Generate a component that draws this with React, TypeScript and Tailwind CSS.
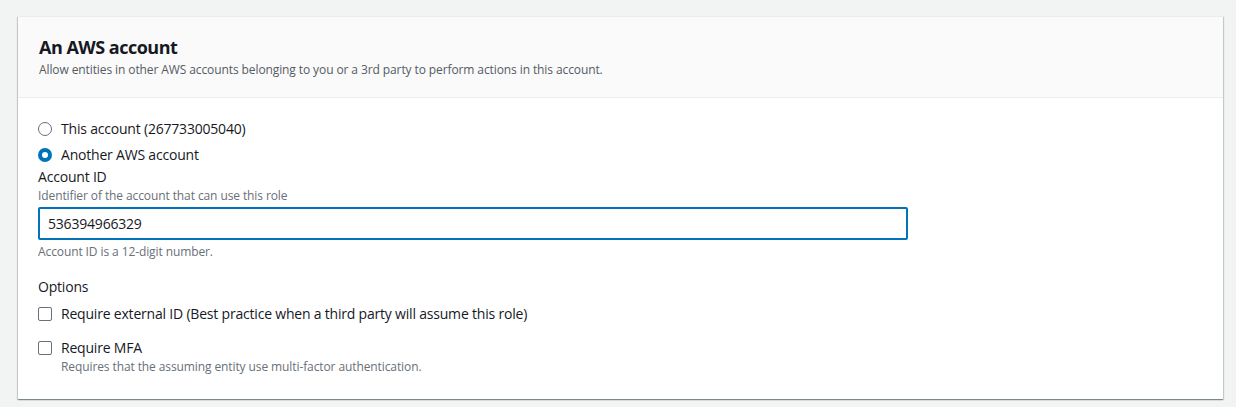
export default function App() {
  return (
    <main
      className="min-h-[407px] bg-[#f2f3f3] pl-[18px] pr-[13px] pt-[16px] pb-[9px] text-[#16191f]"
      style={{ fontFamily: '"Open Sans", "Noto Sans", Arial, sans-serif' }}
    >
      <section className="bg-white shadow-[0_1px_1px_0_rgba(0,28,36,0.3),1px_1px_1px_0_rgba(0,28,36,0.15),-1px_1px_1px_0_rgba(0,28,36,0.15)] border-t border-[#eaeded]">
        <Header />
        <div className="px-5 pt-[20px] pb-[24px]">
          <div className="flex flex-col gap-1">
            <Radio label="This account (267733005040)" />
            <Radio label="Another AWS account" checked />
          </div>

          <div>
            <div className="text-sm leading-[22px] tracking-[-0.2px]">Account ID</div>
            <div className="text-xs leading-4 tracking-[-0.1px] text-[#687078]">
              Identifier of the account that can use this role
            </div>
            <div className="mt-[3px] w-[870px] h-[33px] border-2 border-[#0073bb] rounded-[2px] flex items-center px-[8px] text-sm tracking-[-0.2px]">
              536394966329
            </div>
            <div className="mt-[4px] text-xs leading-4 tracking-[-0.1px] text-[#687078]">
              Account ID is a 12-digit number.
            </div>
          </div>

          <div className="mt-4">
            <div className="text-sm leading-[22px] tracking-[-0.2px]">Options</div>
            <div className="mt-[5px]">
              <Checkbox label="Require external ID (Best practice when a third party will assume this role)" />
            </div>
            <div className="mt-3">
              <Checkbox
                label="Require MFA"
                description="Requires that the assuming entity use multi-factor authentication."
              />
            </div>
          </div>
        </div>
      </section>
    </main>
  );
}

function Header() {
  return (
    <header className="bg-[#fafafa] border-b border-[#eaeded] pl-[21px] pr-5 pt-[19px] pb-[19px]">
      <h2 className="text-[18px] leading-[22px] font-bold tracking-[-0.5px]">An AWS account</h2>
      <p className="mt-[4px] text-xs leading-4 tracking-[-0.1px] text-[#545b64]">
        Allow entities in other AWS accounts belonging to you or a 3rd party to perform actions in this account.
      </p>
    </header>
  );
}

function Radio(props: { label: string; checked?: boolean }) {
  return (
    <label className="flex items-center gap-[9px] text-sm leading-[22px] tracking-[-0.2px]">
      <span
        className={
          props.checked
            ? "w-[14px] h-[14px] rounded-full border-[4px] border-[#0073bb] bg-white"
            : "w-[14px] h-[14px] rounded-full border-[1.5px] border-[#687078] bg-white"
        }
      />
      {props.label}
    </label>
  );
}

function Checkbox(props: { label: string; description?: string }) {
  return (
    <div className="flex gap-[9px]">
      <span className="mt-[4px] w-[14px] h-[14px] rounded-[2px] border-[1.5px] border-[#687078] bg-white shrink-0" />
      <div>
        <div className="text-sm leading-[22px] tracking-[-0.2px]">{props.label}</div>
        {props.description && (
          <div className="text-xs leading-4 tracking-[-0.1px] text-[#687078]">{props.description}</div>
        )}
      </div>
    </div>
  );
}
